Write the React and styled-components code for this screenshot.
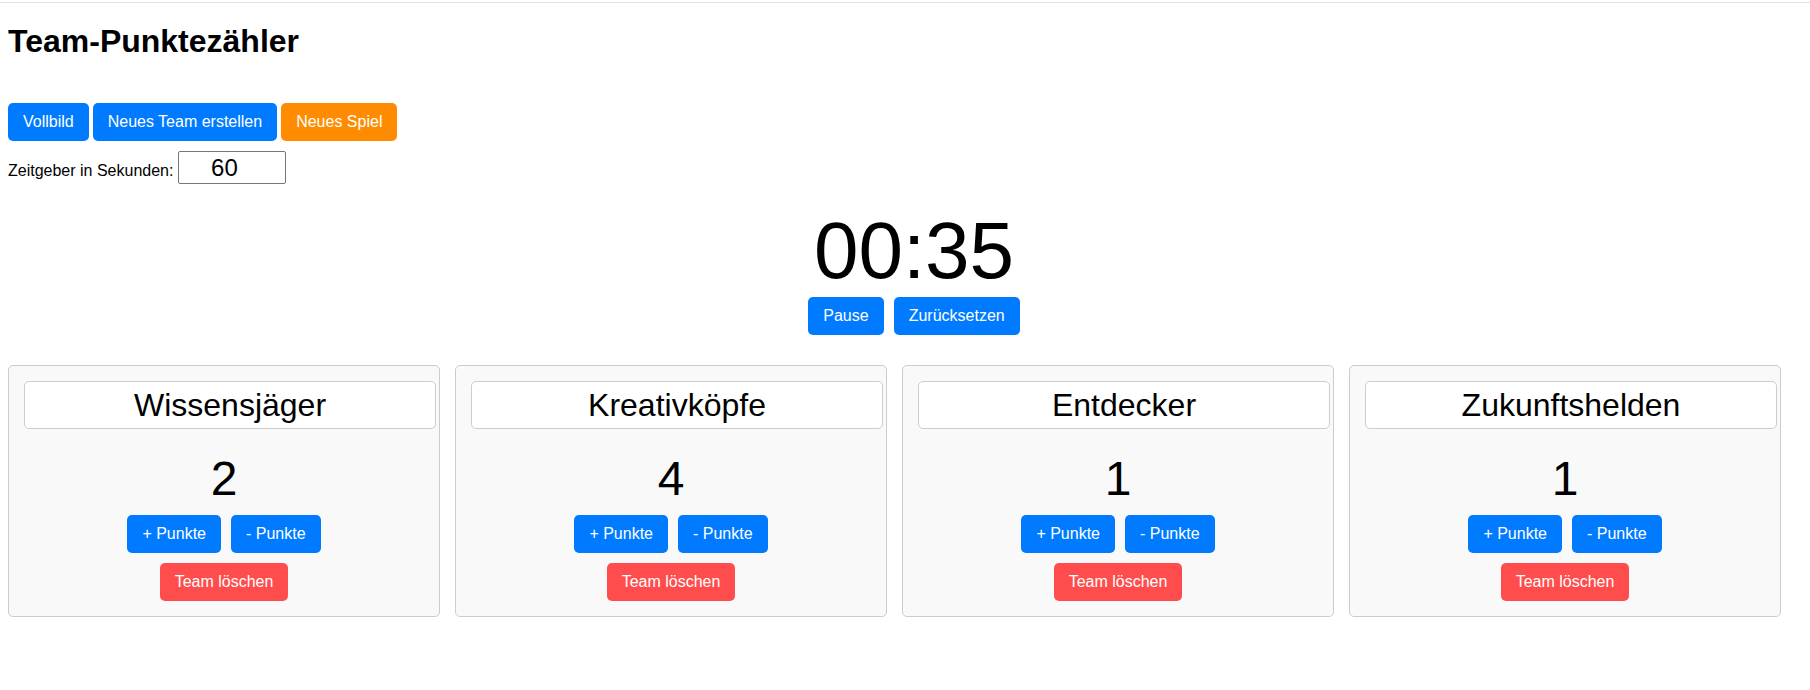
import React, { useState } from 'react'
import styled, { createGlobalStyle } from 'styled-components'

const GlobalStyle = createGlobalStyle`
    body {
        margin: 0px;
        background: #FFFFFF;
        font-family: "Liberation Sans", Arial, sans-serif;
        color: #000000;
    }
`

const TopRule = styled.div`
    height: 1px;
    margin-top: 2px;
    background: #E3E3E3;
`

const Page = styled.div`
    padding: 0px 8px;
`

const Title = styled.h1`
    margin: 20px 0px 43px;
    font-size: 32px;
    line-height: 37px;
    font-weight: bold;
`

const Toolbar = styled.div`
    display: flex;
    gap: 4px;
`

const Button = styled.button`
    height: 38px;
    padding: 10px 15px;
    border: none;
    border-radius: 5px;
    background: ${props => props.$color || '#007BFF'};
    color: #FFFFFF;
    font-family: "Liberation Sans", Arial, sans-serif;
    font-size: 16px;
    line-height: 18px;
    cursor: pointer;
    white-space: nowrap;
`

const TimerRow = styled.label`
    display: flex;
    align-items: baseline;
    gap: 5px;
    margin-top: 10px;
    font-size: 16px;
`

const SecondsInput = styled.input`
    box-sizing: border-box;
    width: 108px;
    height: 33px;
    padding: 0px 16px 0px 0px;
    border: 1px solid #767676;
    border-radius: 2px;
    font-family: "Liberation Sans", Arial, sans-serif;
    font-size: 24px;
    line-height: 31px;
    text-align: center;
`

const TimerSection = styled.div`
    margin-top: 21px;
    padding-left: 18px;
    text-align: center;
`

const Clock = styled.div`
    font-size: 80px;
    line-height: 92px;
`

const ButtonGroup = styled.div`
    display: flex;
    justify-content: center;
    gap: 10px;
    margin-top: ${props => props.$top || 0}px;
`

const Teams = styled.div`
    display: flex;
    flex-wrap: wrap;
    gap: 15px;
    margin-top: 30px;
`

const Card = styled.div`
    box-sizing: border-box;
    width: 432px;
    padding: 15px;
    border: 1px solid #CCCCCC;
    border-radius: 5px;
    background: #F9F9F9;
    text-align: center;
`

const NameInput = styled.input`
    display: block;
    width: 100%;
    margin: 0px;
    padding: 5px;
    border: 1px solid #CCCCCC;
    border-radius: 5px;
    background: #FFFFFF;
    font-family: "Liberation Sans", Arial, sans-serif;
    font-size: 32px;
    line-height: 36px;
    height: 36px;
    text-align: center;
    color: #000000;
`

const Score = styled.div`
    margin-top: 22px;
    font-size: 48px;
    line-height: 55px;
`

const initialTeams = [
    { name: 'Wissensjäger', score: 2 },
    { name: 'Kreativköpfe', score: 4 },
    { name: 'Entdecker', score: 1 },
    { name: 'Zukunftshelden', score: 1 },
]

export default function App() {
    const [teams, setTeams] = useState(initialTeams)
    const [seconds, setSeconds] = useState('60')

    const changeScore = (index, delta) => {
        setTeams(teams.map((t, i) => i === index ? { ...t, score: t.score + delta } : t))
    }

    const rename = (index, name) => {
        setTeams(teams.map((t, i) => i === index ? { ...t, name } : t))
    }

    return (
        <>
            <GlobalStyle />
            <TopRule />
            <Page>
                <Title>Team-Punktezähler</Title>
                <Toolbar>
                    <Button>Vollbild</Button>
                    <Button>Neues Team erstellen</Button>
                    <Button $color={'#FF8C00'}>Neues Spiel</Button>
                </Toolbar>
                <TimerRow>
                    Zeitgeber in Sekunden:
                    <SecondsInput value={seconds} onChange={e => setSeconds(e.target.value)} />
                </TimerRow>
                <TimerSection>
                    <Clock>00:35</Clock>
                    <ButtonGroup>
                        <Button>Pause</Button>
                        <Button>Zurücksetzen</Button>
                    </ButtonGroup>
                </TimerSection>
                <Teams>
                    {teams.map((team, i) => (
                        <Card key={i}>
                            <NameInput value={team.name} onChange={e => rename(i, e.target.value)} />
                            <Score>{team.score}</Score>
                            <ButtonGroup $top={9}>
                                <Button onClick={() => changeScore(i, 1)}>+ Punkte</Button>
                                <Button onClick={() => changeScore(i, -1)}>- Punkte</Button>
                            </ButtonGroup>
                            <ButtonGroup $top={10}>
                                <Button $color={'#FF4D4D'}>Team löschen</Button>
                            </ButtonGroup>
                        </Card>
                    ))}
                </Teams>
            </Page>
        </>
    )
}
